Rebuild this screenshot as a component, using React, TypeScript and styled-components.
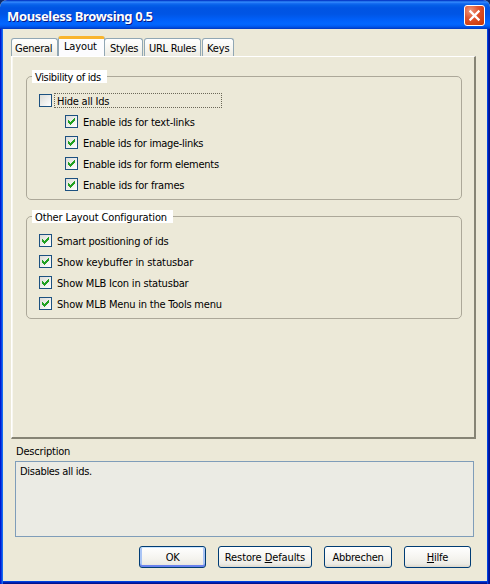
import React from 'react';
import styled, { createGlobalStyle, css } from 'styled-components';

const Global = createGlobalStyle`
  * { box-sizing: border-box; }
  html, body { margin: 0; padding: 0; overflow: hidden; background: #0c2a6b; }
`;

const Dialog = styled.div`
  width: 490px;
  height: 584px;
  display: flex;
  flex-direction: column;
  overflow: hidden;
  border-radius: 7px 7px 0 0;
  background: #ece9d8;
  font: 11px/14px Tahoma, 'DejaVu Sans Condensed', 'DejaVu Sans', sans-serif;
  color: #000;
  cursor: default;
`;

const TitleBar = styled.header`
  flex: 0 0 29px;
  display: flex;
  align-items: center;
  justify-content: space-between;
  padding: 2px 5px 0 7px;
  background: linear-gradient(
    to bottom,
    #0830c0 0, #0a50d8 1px, #3a93ff 2px, #1c70f4 3px, #0560e8 5px, #0054e3 8px,
    #0055e5 14px, #0060fa 20px, #0267ff 24px, #005df5 26px, #0046d4 28px, #0036bd 29px
  );
`;

const Title = styled.h1`
  margin: 0;
  font: bold 13px/18px 'Trebuchet MS', 'Noto Sans', sans-serif;
  letter-spacing: -0.35px;
  color: #fff;
  white-space: nowrap;
  text-shadow: 1px 1px 0 #0a1883;
`;

const CloseButton = styled.button`
  width: 21px;
  height: 21px;
  padding: 0;
  border: 0;
  background: none;
  svg { display: block; }
`;

const Frame = styled.main`
  flex: 1;
  display: flex;
  flex-direction: column;
  border: solid;
  border-width: 0 3px 3px;
  border-color: transparent;
  background:
    linear-gradient(#ece9d8, #ece9d8) padding-box,
    linear-gradient(to right, #0019cf 0 1px, #0a40e4 1px 2px, #146bf0 2px 3px, transparent 3px calc(100% - 3px), #0042dc calc(100% - 3px) calc(100% - 2px), #0019b0 calc(100% - 2px) calc(100% - 1px), #00138c calc(100% - 1px)) border-box,
    linear-gradient(to top, #00138c 0 1px, #001fb4 1px 2px, #0042dc 2px 3px, transparent 3px) border-box;
  padding: 8px 11px 0 8px;
`;

const TabList = styled.nav`
  height: 19px;
  display: flex;
  align-items: flex-end;
  z-index: 1;
`;

const Tab = styled.div<{ $w: number; $gap?: number; $active?: boolean; $track?: number; $pad?: number }>`
  width: ${p => p.$w}px;
  height: 18px;
  margin-left: ${p => p.$gap ?? 0}px;
  padding-left: ${p => p.$pad ?? 4}px;
  border: 1px solid #91a7b4;
  border-bottom: 0;
  border-radius: 3px 3px 0 0;
  background: linear-gradient(#fff, #f6f5ef 60%, #ecebe3);
  line-height: 19px;
  letter-spacing: ${p => p.$track ?? 0}px;
  white-space: nowrap;
  ${p => p.$active && css`
    height: 20px;
    border-top: 3px solid #f9b52d;
    background: #fcfcfe;
    line-height: 15px;
    box-shadow: inset 0 1px 0 #fff;
  `}
`;

const Panel = styled.section`
  height: 383px;
  flex: none;
  border: solid;
  border-width: 1px 2px 2px 1px;
  border-color: #fff #868475 #868475 #fff;
  box-shadow: inset 1px 0 0 #f8f7f0;
  padding: 19px 12px 0 14px;
`;

const Group = styled.section<{ $h: number }>`
  height: ${p => p.$h}px;
  margin-bottom: 16px;
  padding-left: 5px;
  border: 1px solid #aca899;
  border-radius: 5px;
`;

const Legend = styled.h2<{ $w: number; $track?: number }>`
  width: ${p => p.$w}px;
  height: 13px;
  margin: -7px 0 7px;
  padding-left: 3px;
  background: #fff;
  font: inherit;
  line-height: 15px;
  letter-spacing: ${p => p.$track ?? 0}px;
  white-space: nowrap;
`;

const OptionRow = styled.label<{ $nested?: boolean }>`
  height: 21px;
  display: flex;
  align-items: center;
  gap: 2px;
  padding-left: ${p => (p.$nested ? 33 : 7)}px;
`;

const Box = styled.span`
  width: 13px;
  height: 13px;
  flex: none;
  border: 1px solid #1c5180;
  background: linear-gradient(135deg, #dcdcd7, #fff);
  svg { display: block; }
`;

const OptionText = styled.span<{ $focused?: boolean; $track?: number }>`
  height: 15px;
  padding: 0 2px;
  border: 1px dotted transparent;
  line-height: 15px;
  letter-spacing: ${p => p.$track ?? 0}px;
  white-space: nowrap;
  ${p => p.$focused && css`
    width: 168px;
    border-color: #6b6858;
  `}
`;

const DescriptionLabel = styled.div`
  margin: 5px 0 3px 5px;
  height: 14px;
  line-height: 16px;
  letter-spacing: -0.2px;
`;

const DescriptionBox = styled.div`
  width: 459px;
  height: 76px;
  margin-left: 4px;
  padding: 3px 4px;
  border: 1px solid #7f9db9;
  background: #ebebe4;
  letter-spacing: -0.3px;
`;

const Buttons = styled.footer`
  display: flex;
  justify-content: flex-end;
  gap: 12px;
  margin-top: 9px;
  padding-right: 5px;
`;

const Button = styled.button<{ $w: number; $primary?: boolean; $track?: number }>`
  width: ${p => p.$w}px;
  height: 22px;
  padding: 2px 0 0;
  border: 1px solid #003c74;
  border-radius: 3px;
  background: linear-gradient(#fff, #f4f3ee 60%, #ecebe5 85%, #dcd7cb);
  color: #000;
  font: inherit;
  line-height: 18px;
  letter-spacing: ${p => p.$track ?? 0}px;
  white-space: nowrap;
  ${p => p.$primary && css`
    box-shadow: inset 0 1px 0 #cee7ff, inset 0 -2px 0 #6982ee, inset 2px 0 0 #a9c4f5, inset -2px 0 0 #a9c4f5;
  `}
`;

const Mnemonic = styled.span`
  text-decoration: underline;
  text-decoration-thickness: 1px;
  text-underline-offset: 1px;
  text-decoration-skip-ink: none;
`;

function CloseIcon() {
  return (
    <svg width="21" height="21" viewBox="0 0 21 21">
      <defs>
        <radialGradient id="closeFill" cx="0.3" cy="0.25" r="0.9">
          <stop offset="0" stopColor="#ee987c" />
          <stop offset="0.45" stopColor="#e0532e" />
          <stop offset="1" stopColor="#cc3905" />
        </radialGradient>
      </defs>
      <rect x="0.5" y="0.5" width="20" height="20" rx="2.5" fill="url(#closeFill)" stroke="#fff" />
      <path d="M5.6 5.6 15.4 15.4M15.4 5.6 5.6 15.4" stroke="#fff" strokeWidth="2.2" />
    </svg>
  );
}

function CheckMark() {
  return (
    <svg width="11" height="11" viewBox="0 0 11 11" shapeRendering="crispEdges">
      <path
        fill="#21a121"
        d="M2 4h1v3H2zM3 5h1v3H3zM4 6h1v3H4zM5 5h1v3H5zM6 4h1v3H6zM7 3h1v3H7zM8 2h1v3H8z"
      />
    </svg>
  );
}

interface OptionProps {
  label: string;
  checked?: boolean;
  nested?: boolean;
  focused?: boolean;
  track?: number;
}

function Option({ label, checked = true, nested, focused, track }: OptionProps) {
  return (
    <OptionRow $nested={nested}>
      <Box>{checked && <CheckMark />}</Box>
      <OptionText $focused={focused} $track={track}>{label}</OptionText>
    </OptionRow>
  );
}

export default function App() {
  return (
    <>
      <Global />
      <Dialog>
        <TitleBar>
          <Title>Mouseless Browsing 0.5</Title>
          <CloseButton aria-label="Close"><CloseIcon /></CloseButton>
        </TitleBar>
        <Frame>
          <TabList>
            <Tab $w={47} $pad={3} $track={-0.25}>General</Tab>
            <Tab $w={47} $active $pad={5} $track={-0.15}>Layout</Tab>
            <Tab $w={39} $gap={-1} $pad={5} $track={-0.3}>Styles</Tab>
            <Tab $w={57} $gap={1} $track={-0.25}>URL Rules</Tab>
            <Tab $w={32} $gap={1} $track={-0.1}>Keys</Tab>
          </TabList>
          <Panel>
            <Group $h={124}>
              <Legend $w={75} $track={-0.33}>Visibility of ids</Legend>
              <Option label="Hide all Ids" checked={false} focused track={-0.22} />
              <Option nested label="Enable ids for text-links" track={-0.2} />
              <Option nested label="Enable ids for image-links" track={-0.3} />
              <Option nested label="Enable ids for form elements" track={-0.26} />
              <Option nested label="Enable ids for frames" track={-0.2} />
            </Group>
            <Group $h={103}>
              <Legend $w={141} $track={-0.12}>Other Layout Configuration</Legend>
              <Option label="Smart positioning of ids" track={-0.26} />
              <Option label="Show keybuffer in statusbar" track={-0.1} />
              <Option label="Show MLB Icon in statusbar" track={-0.2} />
              <Option label="Show MLB Menu in the Tools menu" track={-0.21} />
            </Group>
          </Panel>
          <DescriptionLabel>Description</DescriptionLabel>
          <DescriptionBox>Disables all ids.</DescriptionBox>
          <Buttons>
            <Button $w={67} $primary $track={-0.5}>OK</Button>
            <Button $w={94} $track={-0.1}>Restore <Mnemonic>D</Mnemonic>efaults</Button>
            <Button $w={68} $track={-0.25}>Abbrechen</Button>
            <Button $w={67} $track={-0.25}><Mnemonic>H</Mnemonic>ilfe</Button>
          </Buttons>
        </Frame>
      </Dialog>
    </>
  );
}
